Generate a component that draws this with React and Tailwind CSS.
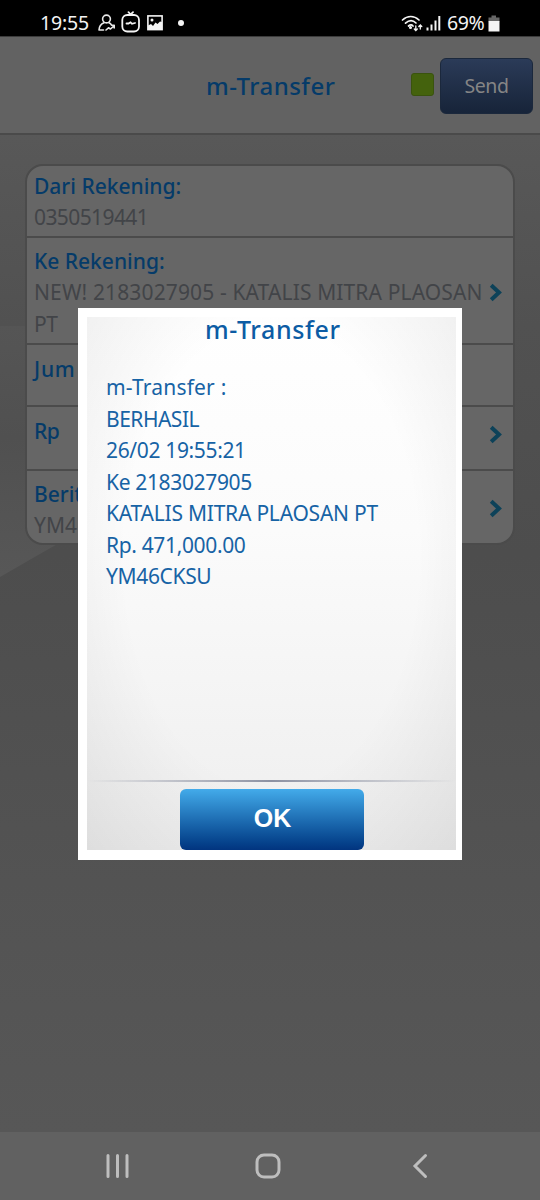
import React from "react";

const Chevron = () => (
  <svg width="13" height="19" viewBox="0 0 13 19" className="shrink-0">
    <path d="M2.2 2.2L10 9.5L2.2 16.8" fill="none" stroke="#0d4259" strokeWidth="4" />
  </svg>
);

const StatusBar = () => (
  <div className="h-9 bg-black flex items-start justify-between pl-10 pr-10 text-[#f4f4f4]">
    <div className="flex items-center h-[46px]">
      <span className="text-[19.5px] w-[50px] tracking-[-0.2px]">19:55</span>
      {/* Contact */}
      <svg width="18" height="18" viewBox="0 0 18 18" className="ml-[8px]" fill="none" stroke="#e8e8e8" strokeWidth="1.6" strokeLinecap="round" strokeLinejoin="round">
        <circle cx="8.500" cy="5" r="3.900" />
        <path d="M6 8.800C3 10 1.200 12.500 1 16H5.500" />
        <path d="M11 8.800C12.300 9.400 13 10.200 13.500 11M8 16L10.500 13.800L12.500 15L16 11.800M13.500 11.300H16.200V14" />
      </svg>
      {/* TV */}
      <svg width="20" height="22" viewBox="0 0 20 22" className="ml-[5px] -mt-[2px]" fill="none" stroke="#f4f4f4" strokeWidth="1.8" strokeLinecap="round">
        <rect x="1.300" y="4" width="16.700" height="16.500" rx="5" />
        <path d="M7.500 1.200L9.700 3.500L12 1.200M5.500 12.500H7.500L9.500 11.300L11 12.800L14 12" />
      </svg>
      {/* Picture */}
      <svg width="16" height="16" viewBox="0 0 16 16" className="ml-[6px]">
        <rect x="0.900" y="0.900" width="14.200" height="13.700" fill="none" stroke="#f4f4f4" strokeWidth="1.600" />
        <path d="M1 10.500L4 9L6 11L8.500 7.500L10.500 9L13 6.500L15 7V15H1Z" fill="#f4f4f4" />
        <circle cx="5" cy="5" r="1.500" fill="#f4f4f4" />
      </svg>
      <span className="ml-[15px] size-[6px] rounded-full bg-[#f4f4f4]" />
    </div>
    <div className="flex items-center h-[46px]">
      <svg width="22" height="17" viewBox="0 0 22 17" fill="none" stroke="#f4f4f4" strokeWidth="1.700" strokeLinecap="round">
        <path d="M1.500 5C6.500 0.300 13 0.300 18 5M4.500 8.200C8 5 12 5 15 8M7.500 11C9 9.800 11 9.800 12 11" />
        <circle cx="9.500" cy="12.500" r="0.700" fill="#f4f4f4" />
        <path d="M14.800 11V15.300M13.300 14L14.800 15.500L16.300 14M19.300 14V10M17.800 11.500L19.300 10L20.800 11.500" strokeWidth="1.300" />
      </svg>
      <svg width="15" height="16" viewBox="0 0 15 16" className="ml-[3px]" stroke="#f4f4f4" strokeWidth="2">
        <path d="M1.500 12.500V15.500M5.500 9.500V15.500M9.500 5.500V15.500M13.300 1V15.500" />
      </svg>
      <span className="ml-[6px] w-[40px] text-[19.5px] tracking-[-0.4px]">69%</span>
      <svg width="12" height="17" viewBox="0 0 12 17" className="ml-px">
        <path d="M3.500 0.500H8V2.500H11.500V6.500H0.500V2.500H3.500Z" fill="#666" />
        <rect x="0.500" y="6" width="11" height="10.500" fill="#f4f4f4" />
      </svg>
    </div>
  </div>
);

const Header = () => (
  <div className="h-[99px] bg-[#626262] border-t border-b-2 border-t-[#3b3b3b] border-b-[#4a4a4a] flex items-center pr-[7px] pt-px">
    <h1 className="ml-[206px] w-[205px] text-[24px] font-medium text-[#053b69] tracking-[0.5px]">m-Transfer</h1>
    <span className="size-[23px] mr-[6px] -mt-[2px] rounded-[3px] bg-[#44620d] border border-[#3a530e]" />
    <button className="w-[93px] h-14 rounded-md border border-[#1b283c] bg-linear-to-b from-[#2b3b58] to-[#172439] text-[19.5px] tracking-[-0.4px] text-[#858585]">
      Send
    </button>
  </div>
);

// Light band and curve behind the form
const Backdrop = () => (
  <svg width="540" height="997" viewBox="0 135 540 997" className="absolute left-0 top-[135px]">
    <defs>
      <linearGradient id="page" gradientUnits="userSpaceOnUse" x1="0" y1="135" x2="0" y2="1132">
        <stop offset="0" stopColor="#585858" />
        <stop offset="0.19" stopColor="#515151" />
        <stop offset="0.42" stopColor="#4d4d4d" />
        <stop offset="0.75" stopColor="#535353" />
        <stop offset="1" stopColor="#575757" />
      </linearGradient>
      <linearGradient id="band" gradientUnits="userSpaceOnUse" x1="0" y1="325" x2="0" y2="575">
        <stop offset="0" stopColor="#555555" />
        <stop offset="0.45" stopColor="#505050" />
        <stop offset="1" stopColor="#575757" />
      </linearGradient>
    </defs>
    <rect y="135" width="540" height="997" fill="url(#page)" />
    <path d="M0 326H400C300 410 150 490 0 577Z" fill="url(#band)" />
  </svg>
);

const Form = () => (
  <div className="relative mx-[25px] mt-[29px] h-[381px] rounded-[18px] border-2 border-[#4b4b4b] bg-[#666] overflow-hidden text-[21px] text-[#424448]">
    <div className="h-[72px] border-b-2 border-[#4b4b4b] pl-[7px] pt-1">
      <p className="leading-[33px] font-medium text-[#053b69]">Dari Rekening:</p>
      <p className="-mt-px leading-[30px] tracking-[-0.6px]">0350519441</p>
    </div>
    <div className="h-[107px] border-b-2 border-[#4b4b4b] pl-[7px] pt-[7px]">
      <p className="leading-[32px] font-medium text-[#053b69]">Ke Rekening:</p>
      <div className="-mt-px flex items-center h-[32px]">
        <p className="w-[455px] leading-[32px] tracking-[0.13px] whitespace-nowrap">NEW! 2183027905 - KATALIS MITRA PLAOSAN</p>
        <Chevron />
      </div>
      <p className="leading-[32px] tracking-[-0.5px]">PT</p>
    </div>
    <div className="h-[62px] border-b-2 border-[#4b4b4b] pl-[7px] pt-[8px]">
      <p className="leading-[32px] font-medium tracking-[0.8px] text-[#053b69]">Jum</p>
    </div>
    <div className="h-[64px] border-b-2 border-[#4b4b4b] pl-[7px] pb-2 pr-[11px] flex items-center justify-between">
      <p className="font-medium text-[#053b69] -mt-1 tracking-[-0.5px]">Rp</p>
      <Chevron />
    </div>
    <div className="h-[75px] pl-[7px] pr-[11px] flex items-center justify-between">
      <div>
        <p className="leading-[32px] font-medium text-[#053b69]">Berit</p>
        <p className="leading-[30px]">YM4</p>
      </div>
      <Chevron />
    </div>
  </div>
);

const Dialog = () => (
  <div className="absolute left-[78px] top-[308px] w-[384px] h-[552px] bg-white pt-[9px] pb-[10px] pl-[9px] pr-[6px]">
    <div className="h-full flex flex-col bg-[radial-gradient(ellipse_72%_78%_at_50%_45%,transparent_55%,rgba(0,0,0,0.07)_100%),linear-gradient(to_bottom,#ffffff,#fbfbfb_40%,#eeeeee)]">
      <h2 className="pl-[118px] leading-[24px] text-[25px] font-medium tracking-[0.6px] text-[#0c5ca4]">m-Transfer</h2>
      <div className="pl-[19px] pt-[31px] h-[439px] text-[21px] leading-[31.5px] tracking-[-0.35px] text-[#1763a5] whitespace-nowrap">
        <p className="tracking-[0.2px]">m-Transfer :</p>
        <p className="tracking-[-0.5px]">BERHASIL</p>
        <p>26/02 19:55:21</p>
        <p>Ke 2183027905</p>
        <p className="tracking-[-0.22px]">KATALIS MITRA PLAOSAN PT</p>
        <p>Rp. 471,000.00</p>
        <p>YM46CKSU</p>
      </div>
      <div className="h-[2px] bg-linear-to-r from-transparent via-[#8c91a2] to-transparent" />
      <button className="mt-[7px] ml-[93px] w-[184px] h-[61px] pb-px pl-px rounded-md bg-linear-to-b from-[#43abea] to-[#02347f] font-['Liberation_Sans',Arial,sans-serif] text-[25px] font-bold text-white">
        OK
      </button>
    </div>
  </div>
);

const NavBar = () => (
  <div className="h-[68px] bg-[#616161] flex items-center pl-[106px]">
    <svg width="24" height="26" viewBox="0 0 24 26" stroke="#bebebe" strokeWidth="3" strokeLinecap="round">
      <path d="M2 2.500V23.500M11.500 2.500V23.500M21 2.500V23.500" />
    </svg>
    <svg width="26" height="26" viewBox="0 0 26 26" className="ml-[125px]" fill="none" stroke="#bebebe" strokeWidth="3">
      <rect x="2" y="2" width="22" height="22" rx="7" />
    </svg>
    <svg width="16" height="26" viewBox="0 0 16 26" className="ml-[131px]" fill="none" stroke="#bebebe" strokeWidth="3" strokeLinecap="round">
      <path d="M13.500 2.500L3 13L13.500 23.500" />
    </svg>
  </div>
);

export default function App() {
  return (
    <div className="relative w-[540px] h-[1200px] overflow-hidden font-['Noto_Sans','Open_Sans',sans-serif]">
      <StatusBar />
      <Header />
      <div className="h-[997px] overflow-hidden">
        <Backdrop />
        <Form />
      </div>
      <NavBar />
      <Dialog />
    </div>
  );
}
